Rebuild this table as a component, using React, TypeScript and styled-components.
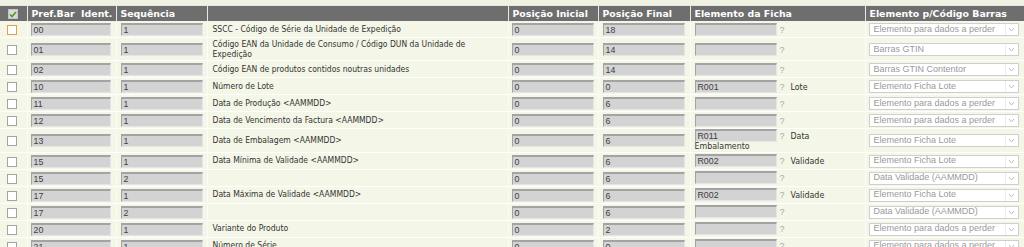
import React from "react";
import styled, { createGlobalStyle } from "styled-components";

const GlobalStyle = createGlobalStyle`
  html, body {
    margin: 0;
    padding: 0;
    background: #f4f7e8;
    overflow: hidden;
  }
`;

const Page = styled.div`
  width: 1024px;
  font-family: "DejaVu Sans Condensed", "DejaVu Sans", sans-serif;
  font-size: 8.5px;
  color: #333;
`;

const TopStrip = styled.div`
  height: 5px;
  background: #eff2e2;
  border-bottom: 1px solid #e4e7d6;
`;

const Grid = styled.table`
  width: 1024px;
  border-collapse: collapse;
  table-layout: fixed;
`;

const HeadCell = styled.th`
  height: 15px;
  padding: 0 0 0 4px;
  background: #6e6e6e;
  color: #fff;
  font-family: "DejaVu Sans", sans-serif;
  font-weight: bold;
  font-size: 9.4px;
  text-align: left;
  border-left: 1px solid #e8ebdb;
  white-space: nowrap;
  overflow: hidden;

  &:first-child {
    border-left: none;
    padding: 0;
    text-align: center;
  }
`;

const Row = styled.tr`
  border-bottom: 1px solid #ffffff;
`;

const Cell = styled.td<{ $pad?: number; $tight?: boolean }>`
  padding: ${(p) => (p.$tight ? "0" : "2px")} 2px ${(p) => (p.$tight ? "0" : "1px")}
    ${(p) => p.$pad ?? 3}px;
  line-height: 9.5px;
  vertical-align: middle;
  border-left: 1px solid #fbfcf6;

  &:first-child {
    border-left: none;
    padding-left: 0;
    text-align: center;
  }
`;

const Check = styled.span<{ $focus?: boolean }>`
  display: inline-block;
  width: 10px;
  height: 10px;
  margin-top: 1px;
  box-sizing: border-box;
  background: #fff;
  border: 1px solid ${(p) => (p.$focus ? "#e3a23c" : "#a4a4a4")};
  vertical-align: top;
`;

const HeadCheck = styled.span`
  display: inline-flex;
  align-items: center;
  justify-content: center;
  width: 10px;
  height: 10px;
  background: #d9d9d9;
  border: 1px solid #c4c4c4;
  box-sizing: border-box;
  vertical-align: middle;
`;

const Field = styled.span<{ $w: number }>`
  display: inline-block;
  box-sizing: border-box;
  width: ${(p) => p.$w}px;
  height: 13px;
  padding: 1px 0 0 2px;
  background: #d3d3d3;
  border-top: 2px solid #a3a3a3;
  border-left: 1px solid #a3a3a3;
  border-right: 1px solid #e6e6e6;
  border-bottom: 1px solid #e6e6e6;
  font-family: "Liberation Sans", Arial, sans-serif;
  font-size: 8.8px;
  line-height: 9px;
  color: #3e3e3e;
  vertical-align: baseline;
`;

const Hint = styled.span`
  display: inline-block;
  width: 9px;
  margin-left: 1px;
  font-family: "Liberation Sans", Arial, sans-serif;
  font-size: 9px;
  line-height: 9px;
  color: #a9a9a9;
  text-align: center;
`;

const FichaLabel = styled.span`
  margin-left: 4px;
  font-size: 8.8px;
  color: #333;
`;

const Picker = styled.div`
  display: flex;
  align-items: center;
  box-sizing: border-box;
  width: 150px;
  height: 13px;
  background: #fff;
  border: 1px solid #cfcfcf;
  font-family: "Liberation Sans", Arial, sans-serif;
  font-size: 9px;
  color: #9a9a9a;
`;

const PickerText = styled.span`
  flex: 1;
  padding-left: 4px;
  white-space: nowrap;
  overflow: hidden;
`;

const PickerArrow = styled.span`
  width: 12px;
  height: 11px;
  border-left: 1px solid #ececec;
  display: flex;
  align-items: center;
  justify-content: center;
`;

type Item = {
  pref: string;
  seq: string;
  desc: string;
  ini: string;
  fim: string;
  ficha: string;
  label: string;
  barras: string;
};

const items: Item[] = [
  { pref: "00", seq: "1", desc: "SSCC - Código de Série da Unidade de Expedição", ini: "0", fim: "18", ficha: "", label: "", barras: "Elemento para dados a perder" },
  { pref: "01", seq: "1", desc: "Código EAN da Unidade de Consumo / Código DUN da Unidade de Expedição", ini: "0", fim: "14", ficha: "", label: "", barras: "Barras GTIN" },
  { pref: "02", seq: "1", desc: "Código EAN de produtos contidos noutras unidades", ini: "0", fim: "14", ficha: "", label: "", barras: "Barras GTIN Contentor" },
  { pref: "10", seq: "1", desc: "Número de Lote", ini: "0", fim: "0", ficha: "R001", label: "Lote", barras: "Elemento Ficha Lote" },
  { pref: "11", seq: "1", desc: "Data de Produção <AAMMDD>", ini: "0", fim: "6", ficha: "", label: "", barras: "Elemento para dados a perder" },
  { pref: "12", seq: "1", desc: "Data de Vencimento da Factura <AAMMDD>", ini: "0", fim: "6", ficha: "", label: "", barras: "Elemento para dados a perder" },
  { pref: "13", seq: "1", desc: "Data de Embalagem <AAMMDD>", ini: "0", fim: "6", ficha: "R011", label: "Data Embalamento", barras: "Elemento Ficha Lote" },
  { pref: "15", seq: "1", desc: "Data Mínima de Validade <AAMMDD>", ini: "0", fim: "6", ficha: "R002", label: "Validade", barras: "Elemento Ficha Lote" },
  { pref: "15", seq: "2", desc: "", ini: "0", fim: "6", ficha: "", label: "", barras: "Data Validade (AAMMDD)" },
  { pref: "17", seq: "1", desc: "Data Máxima de Validade <AAMMDD>", ini: "0", fim: "6", ficha: "R002", label: "Validade", barras: "Elemento Ficha Lote" },
  { pref: "17", seq: "2", desc: "", ini: "0", fim: "6", ficha: "", label: "", barras: "Data Validade (AAMMDD)" },
  { pref: "20", seq: "1", desc: "Variante do Produto", ini: "0", fim: "2", ficha: "", label: "", barras: "Elemento para dados a perder" },
  { pref: "21", seq: "1", desc: "Número de Série", ini: "0", fim: "0", ficha: "", label: "", barras: "Elemento para dados a perder" },
];

const widths = [27, 89, 91, 301, 90, 92, 175, 159];

const App: React.FC = () => {
  return (
    <Page>
      <GlobalStyle />
      <TopStrip />
      <Grid>
        <colgroup>
          {widths.map((w, i) => (
            <col key={i} style={{ width: w }} />
          ))}
        </colgroup>
        <thead>
          <tr>
            <HeadCell>
              <HeadCheck>
                <svg width="8" height="7" viewBox="0 0 8 7">
                  <path d="M1 3.5 L3 5.5 L7 1" fill="none" stroke="#4c9a2a" strokeWidth="1.6" />
                </svg>
              </HeadCheck>
            </HeadCell>
            <HeadCell>Pref.Bar&nbsp; Ident.</HeadCell>
            <HeadCell>Sequência</HeadCell>
            <HeadCell />
            <HeadCell>Posição Inicial</HeadCell>
            <HeadCell>Posição Final</HeadCell>
            <HeadCell>Elemento da Ficha</HeadCell>
            <HeadCell>Elemento p/Código Barras</HeadCell>
          </tr>
        </thead>
        <tbody>
          {items.map((it, i) => (
            <Row key={i}>
              <Cell>
                <Check $focus={i === 0} />
              </Cell>
              <Cell>
                <Field $w={80}>{it.pref}</Field>
              </Cell>
              <Cell $pad={4}>
                <Field $w={82}>{it.seq}</Field>
              </Cell>
              <Cell $pad={5}>{it.desc}</Cell>
              <Cell>
                <Field $w={82}>{it.ini}</Field>
              </Cell>
              <Cell $pad={4}>
                <Field $w={82}>{it.fim}</Field>
              </Cell>
              <Cell $pad={4} $tight>
                <Field $w={82}>{it.ficha || "\u00a0"}</Field>
                <Hint>?</Hint>
                {it.label && <FichaLabel>{it.label}</FichaLabel>}
              </Cell>
              <Cell>
                <Picker>
                  <PickerText>{it.barras}</PickerText>
                  <PickerArrow>
                    <svg width="7" height="5" viewBox="0 0 7 5">
                      <path d="M1 1 L3.5 4 L6 1" fill="none" stroke="#bdbdbd" strokeWidth="1" />
                    </svg>
                  </PickerArrow>
                </Picker>
              </Cell>
            </Row>
          ))}
        </tbody>
      </Grid>
    </Page>
  );
};

export default App;
